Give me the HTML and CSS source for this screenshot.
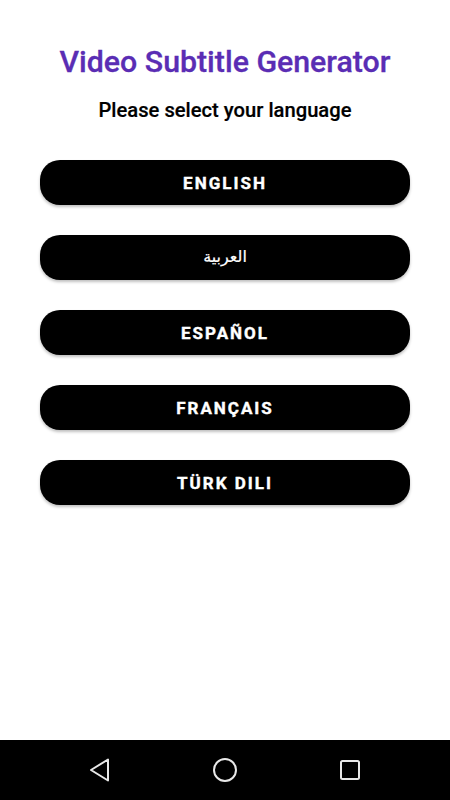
FILE: index.html
```html
<!DOCTYPE html>
<html>
<head>
<meta charset="utf-8">
<link rel="stylesheet" href="styles.css">
</head>
<body>
<div class="screen">
  <main class="content">
    <h1 class="title">Video Subtitle Generator</h1>
    <p class="subtitle">Please select your language</p>
    <div class="buttons">
      <button class="lang">ENGLISH</button>
      <button class="lang arabic">العربية</button>
      <button class="lang">ESPAÑOL</button>
      <button class="lang">FRANÇAIS</button>
      <button class="lang">TÜRK DILI</button>
    </div>
  </main>
  <nav class="navbar">
    <span class="nav-slot"><svg width="24" height="26" viewBox="0 0 24 26"><path d="M20 2.5 L20 23.5 L3 13 Z" fill="none" stroke="#e8e8e8" stroke-width="2" stroke-linejoin="round"/></svg></span>
    <span class="nav-slot"><svg width="26" height="26" viewBox="0 0 26 26"><circle cx="13" cy="13" r="11" fill="none" stroke="#e8e8e8" stroke-width="2"/></svg></span>
    <span class="nav-slot"><svg width="24" height="24" viewBox="0 0 24 24"><rect x="3" y="3" width="18" height="18" rx="1.5" fill="none" stroke="#e8e8e8" stroke-width="2"/></svg></span>
  </nav>
</div>
</body>
</html>
```
FILE: styles.css
```css
* { box-sizing: border-box; }
html, body { margin: 0; padding: 0; }
body { font-family: Roboto, "Noto Sans", sans-serif; background: #fff; }
.screen { width: 450px; height: 800px; display: flex; flex-direction: column; }
.content { flex: 1; display: flex; flex-direction: column; align-items: center; padding: 0 40px; }
.title {
  margin: 44px 0 0;
  font-size: 30.3px;
  font-weight: 500;
  color: #5a2db4;
  line-height: 36px;
  -webkit-text-stroke: 0.3px #5a2db4;
}
.subtitle {
  margin: 18px 0 0;
  font-size: 20.2px;
  font-weight: 500;
  color: #000;
  line-height: 24px;
  -webkit-text-stroke: 0.2px #000;
}
.buttons { margin-top: 38px; width: 100%; display: flex; flex-direction: column; gap: 30px; }
.lang {
  height: 45px;
  width: 100%;
  border: none;
  border-radius: 20px;
  background: #000;
  color: #fff;
  font-family: Roboto, sans-serif;
  font-weight: 700;
  font-size: 17px;
  letter-spacing: 2px;
  -webkit-text-stroke: 0.4px #fff;
  box-shadow: 0 2px 3px rgba(0,0,0,0.25);
  display: flex; align-items: center; justify-content: center;
  padding: 0;
}
.arabic {
  font-family: "Noto Sans", "DejaVu Sans", sans-serif;
  font-weight: 500;
  letter-spacing: 0;
  font-size: 16px;
  -webkit-text-stroke: 0.2px #fff;
  padding-bottom: 4px;
}
.navbar {
  height: 60px;
  background: #000;
  display: flex;
  align-items: center;
  justify-content: space-between;
  padding: 0 75px;
}
.nav-slot { width: 50px; display: flex; justify-content: center; }
.nav-slot svg { display: block; }
```
